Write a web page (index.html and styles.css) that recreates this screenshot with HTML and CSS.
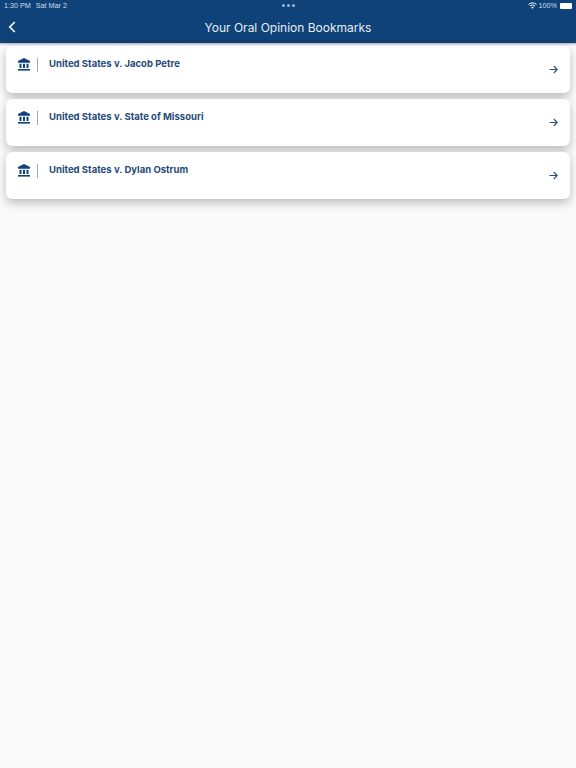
FILE: index.html
```html
<!DOCTYPE html>
<html lang="en">
<head>
    <meta charset="UTF-8">
    <meta name="viewport" content="width=device-width, initial-scale=1.0">
    <title>Your Oral Opinion Bookmarks</title>
    <link rel="stylesheet" href="styles.css">
</head>
<body>
    <div class="top-bar">
        <!-- Status bar -->
        <div class="status-bar">
            <div class="status-left">
                <span>1:30 PM</span>
                <span>Sat Mar 2</span>
            </div>
            <div class="status-dots"><i></i><i></i><i></i></div>
            <div class="status-right">
                <svg class="wifi" width="9" height="7" viewBox="0 0 18 14">
                    <path d="M1 5a11.500 11.500 0 0 1 16 0" fill="none" stroke="#fff" stroke-width="2"/>
                    <path d="M4 8.200a7 7 0 0 1 10 0" fill="none" stroke="#fff" stroke-width="2"/>
                    <path d="M6.500 10.800a3.500 3.500 0 0 1 5 0L9 13.500z" fill="#fff"/>
                </svg>
                <span>100%</span>
                <div class="battery"><div class="battery-fill"></div></div>
            </div>
        </div>
        <!-- Nav -->
        <div class="nav">
            <svg class="back" width="8" height="12" viewBox="0 0 8 12">
                <path d="M6.800 1L1.800 6l5 5" fill="none" stroke="#fff" stroke-width="1.700"/>
            </svg>
            <h1>Your Oral Opinion Bookmarks</h1>
        </div>
    </div>

    <div class="list">
        <div class="card">
            <svg class="court" width="12" height="13" viewBox="0 0 12 13">
                <path d="M6 0L0 3v1.800h12V3z" fill="#0f4279"/>
                <path d="M1.500 5.800h2V10h-2zM5 5.800h2V10H5zM8.500 5.800h2V10h-2z" fill="#0f4279"/>
                <path d="M0 11h12v1.600H0z" fill="#0f4279"/>
            </svg>
            <div class="divider"></div>
            <div class="case-name">United States v. Jacob Petre</div>
            <svg class="arrow" width="9" height="9" viewBox="0 0 9 9">
                <path d="M0.500 4.500h7.500M4.800 1l3.400 3.500L4.800 8" fill="none" stroke="#2d4f80" stroke-width="1.100"/>
            </svg>
        </div>
        <div class="card">
            <svg class="court" width="12" height="13" viewBox="0 0 12 13">
                <path d="M6 0L0 3v1.800h12V3z" fill="#0f4279"/>
                <path d="M1.500 5.800h2V10h-2zM5 5.800h2V10H5zM8.500 5.800h2V10h-2z" fill="#0f4279"/>
                <path d="M0 11h12v1.600H0z" fill="#0f4279"/>
            </svg>
            <div class="divider"></div>
            <div class="case-name">United States v. State of Missouri</div>
            <svg class="arrow" width="9" height="9" viewBox="0 0 9 9">
                <path d="M0.500 4.500h7.500M4.800 1l3.400 3.500L4.800 8" fill="none" stroke="#2d4f80" stroke-width="1.100"/>
            </svg>
        </div>
        <div class="card">
            <svg class="court" width="12" height="13" viewBox="0 0 12 13">
                <path d="M6 0L0 3v1.800h12V3z" fill="#0f4279"/>
                <path d="M1.500 5.800h2V10h-2zM5 5.800h2V10H5zM8.500 5.800h2V10h-2z" fill="#0f4279"/>
                <path d="M0 11h12v1.600H0z" fill="#0f4279"/>
            </svg>
            <div class="divider"></div>
            <div class="case-name">United States v. Dylan Ostrum</div>
            <svg class="arrow" width="9" height="9" viewBox="0 0 9 9">
                <path d="M0.500 4.500h7.500M4.800 1l3.400 3.500L4.800 8" fill="none" stroke="#2d4f80" stroke-width="1.100"/>
            </svg>
        </div>
    </div>
</body>
</html>
```

FILE: styles.css
```css
html, body {
    height: 100%;
}

body {
    font-family: Inter, "Open Sans", sans-serif;
    background-color: #fafafa;
    margin: 0;
    overflow: hidden;
}

.top-bar {
    background-color: #0f4279;
    color: #fff;
    height: 43px;
    box-shadow: 0 1px 2px rgba(0, 0, 0, 0.35);
}

/* Status bar */
.status-bar {
    height: 11px;
    padding: 0 4px;
    display: grid;
    grid-template-columns: 1fr auto 1fr;
    align-items: center;
    font-family: "Liberation Sans", sans-serif;
    font-size: 7.200px;
    color: #d3deea;
}

.status-left {
    display: flex;
    gap: 5px;
}

.status-dots {
    display: flex;
    gap: 2px;
}

.status-dots i {
    width: 3px;
    height: 3px;
    border-radius: 50%;
    background-color: #9db4cf;
}

.status-right {
    display: flex;
    justify-content: flex-end;
    align-items: center;
    gap: 2px;
}

.battery {
    width: 12px;
    height: 6px;
    margin-left: 1px;
    background-color: #fff;
    border-radius: 1px;
}

/* Nav */
.nav {
    height: 32px;
    display: flex;
    align-items: center;
    justify-content: center;
    position: relative;
}

.nav h1 {
    margin: 0;
    font-size: 12px;
    font-weight: 400;
    color: #e6edf4;
}

.back {
    position: absolute;
    left: 8px;
    top: 10px;
}

/* Cards */
.list {
    padding: 3px 6px 0;
    display: flex;
    flex-direction: column;
    gap: 6px;
}

.card {
    height: 47px;
    background-color: #fff;
    border-radius: 6px;
    box-shadow: 0 4px 10px rgba(0, 0, 0, 0.25);
    display: flex;
    align-items: flex-start;
    padding: 12px 12px 0 12px;
    box-sizing: border-box;
}

.court {
    flex-shrink: 0;
}

.divider {
    width: 1px;
    height: 14px;
    margin: 0 11px 0 7px;
    background-color: #9aaabc;
}

.case-name {
    flex: 1;
    font-size: 9.500px;
    font-weight: 700;
    line-height: 12px;
    letter-spacing: 0.02px;
    color: #1f4a7a;
}

.arrow {
    margin-top: 7px;
}
```
